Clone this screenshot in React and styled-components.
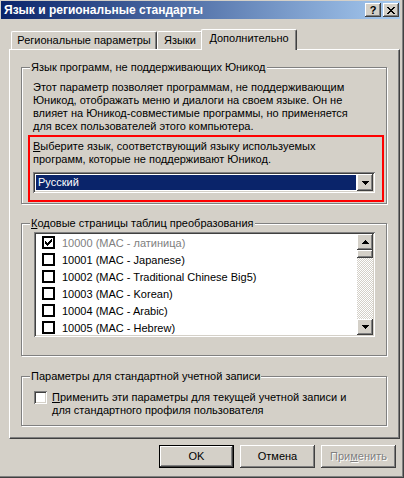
import React from 'react';
import styled, { createGlobalStyle } from 'styled-components';

const Global = createGlobalStyle`
  html, body { margin: 0; padding: 0; background: #d4d0c8; }
  body { font-family: "Liberation Sans", Arial, sans-serif; font-size: 11px; color: #000; }
  * { box-sizing: border-box; }
`;

const raised = `
  background: #d4d0c8;
  box-shadow: inset -1px -1px #404040, inset 1px 1px #fff, inset -2px -2px #808080, inset 2px 2px #d4d0c8;
`;
const sunken = `
  box-shadow: inset 1px 1px #808080, inset -1px -1px #fff, inset 2px 2px #404040, inset -2px -2px #d4d0c8;
`;

const Window = styled.div`
  width: 404px;
  height: 478px;
  background: #d4d0c8;
  padding: 1px 4px 0 1px;
  box-shadow: inset -1px -1px #404040, inset -2px -2px #808080;
  display: flex;
  flex-direction: column;
  overflow: hidden;
`;

const TitleBar = styled.div`
  height: 18px;
  display: flex;
  align-items: center;
  background: linear-gradient(to right, #0a246a, #a6caf0);
  padding: 0 1px 0 3px;
`;

const Title = styled.div`
  flex: 1;
  color: #fff;
  font-weight: bold;
  font-size: 12px;
  line-height: 14px;
  white-space: nowrap;
`;

const CaptionButton = styled.div`
  width: 16px;
  height: 14px;
  margin-left: ${p => p.$gap}px;
  ${raised}
  display: flex;
  align-items: center;
  justify-content: center;
  font-weight: bold;
  font-size: 11px;
  line-height: 14px;
  color: #000;
`;

const TabControl = styled.div`
  margin: 10px 0 0 8px;
  display: flex;
  flex-direction: column;
`;

const TabStrip = styled.div`
  display: flex;
  align-items: flex-end;
  height: 20px;
  padding-left: 2px;
  position: relative;
  z-index: 1;
`;

const Tab = styled.div`
  width: ${p => (p.$active ? p.$w + 4 : p.$w)}px;
  height: ${p => (p.$active ? 21 : 18)}px;
  margin: 0 ${p => (p.$active ? -2 : 0)}px ${p => (p.$active ? -1 : 0)}px;
  background: #d4d0c8;
  border-top: 1px solid #fff;
  border-left: 1px solid #fff;
  border-right: 1px solid #404040;
  border-radius: 2px 2px 0 0;
  box-shadow: inset -1px 0 #808080;
  display: flex;
  align-items: center;
  justify-content: center;
  padding-bottom: ${p => (p.$active ? 3 : 0)}px;
  white-space: nowrap;
  line-height: 13px;
  position: relative;
  z-index: ${p => (p.$active ? 2 : 1)};
`;

const Panel = styled.div`
  height: 390px;
  border-top: 1px solid #fff;
  border-left: 1px solid #fff;
  border-right: 1px solid #404040;
  border-bottom: 1px solid #404040;
  box-shadow: inset -1px -1px #808080;
  padding: 11px 12px 0 11px;
  display: flex;
  flex-direction: column;
`;

const Group = styled.fieldset`
  margin: ${p => p.$mt || 0}px 0 0;
  padding: 0;
  min-width: 0;
  border: 1px solid #808080;
  box-shadow: inset 1px 1px #fff, 1px 1px #fff;
`;

const Legend = styled.legend`
  margin-left: 8px;
  padding: 0 1px;
  line-height: 13px;
  background: #d4d0c8;
`;

const GroupBody = styled.div`
  padding: ${p => p.$pad};
`;

const Text = styled.div`
  line-height: 13px;
  white-space: nowrap;
`;

const Highlight = styled.div`
  margin: 2px -9px 1px -5px;
  border: 2px solid #ff0000;
  padding: 3px 7px 7px 3px;
`;

const Combo = styled.div`
  margin-top: 6px;
  height: 21px;
  display: flex;
  padding: 2px;
  background: #fff;
  ${sunken}
`;

const ComboValue = styled.div`
  flex: 1;
  margin: 1px;
  background: #0a246a;
  color: #fff;
  padding-left: 2px;
  line-height: 15px;
`;

const ArrowButton = styled.div`
  width: 16px;
  height: ${p => p.$h}px;
  flex: none;
  ${raised}
  display: flex;
  align-items: center;
  justify-content: center;
`;

const ListBox = styled.div`
  height: 105px;
  padding: 2px;
  background: #fff;
  ${sunken}
  display: flex;
`;

const Items = styled.div`
  flex: 1;
  overflow: hidden;
`;

const Item = styled.div`
  height: 17px;
  display: flex;
  align-items: center;
  padding-left: 6px;
  gap: 7px;
  color: ${p => (p.$disabled ? '#808080' : '#000')};
  white-space: nowrap;
`;

const FlatCheck = styled.div`
  width: 13px;
  height: 13px;
  border: 2px solid #000;
  background: #fff;
  display: flex;
  align-items: center;
  justify-content: center;
`;

const ScrollBar = styled.div`
  width: 16px;
  display: flex;
  flex-direction: column;
`;

const Thumb = styled.div`
  height: 8px;
  ${raised}
`;

const Track = styled.div`
  flex: 1;
  background: repeating-conic-gradient(#ffffff 0 25%, #d4d0c8 0 50%) 0 0 / 2px 2px;
`;

const CheckRow = styled.div`
  display: flex;
  align-items: flex-start;
  gap: 5px;
`;

const Check3D = styled.div`
  width: 13px;
  height: 13px;
  flex: none;
  background: #fff;
  ${sunken}
`;

const ButtonRow = styled.div`
  display: flex;
  justify-content: flex-end;
  gap: 6px;
  margin: 6px 4px 0 0;
`;

const Button = styled.div`
  width: 75px;
  height: 23px;
  background: #d4d0c8;
  box-shadow: ${p =>
    p.$default
      ? 'inset 0 0 0 1px #000, inset -2px -2px #404040, inset 2px 2px #fff, inset -3px -3px #808080'
      : 'inset -1px -1px #404040, inset 1px 1px #fff, inset -2px -2px #808080, inset 2px 2px #d4d0c8'};
  display: flex;
  align-items: center;
  justify-content: center;
  color: ${p => (p.$disabled ? '#808080' : '#000')};
  text-shadow: ${p => (p.$disabled ? '1px 1px #fff' : 'none')};
  line-height: 13px;
`;

const CloseGlyph = () => (
  <svg width="8" height="7" viewBox="0 0 8 7" shapeRendering="crispEdges">
    <path d="M0 0h2v1H0zM6 0h2v1H6zM1 1h2v1H1zM5 1h2v1H5zM2 2h4v1H2zM3 3h2v1H3zM2 4h4v1H2zM1 5h2v1H1zM5 5h2v1H5zM0 6h2v1H0zM6 6h2v1H6z" fill="#000" />
  </svg>
);

const Arrow = ({ down }) => (
  <svg width="7" height="4" viewBox="0 0 7 4" shapeRendering="crispEdges">
    <path
      d={down ? 'M0 0h7v1H0zM1 1h5v1H1zM2 2h3v1H2zM3 3h1v1H3z' : 'M3 0h1v1H3zM2 1h3v1H2zM1 2h5v1H1zM0 3h7v1H0z'}
      fill="#000"
    />
  </svg>
);

const CheckMark = () => (
  <svg width="7" height="7" viewBox="0 0 7 7" shapeRendering="crispEdges">
    <path d="M0 2h1v3H0zM1 3h1v3H1zM2 4h1v3H2zM3 3h1v3H3zM4 2h1v3H4zM5 1h1v3H5zM6 0h1v3H6z" fill="#000" />
  </svg>
);

const codePages = [
  { label: '10000 (MAC - латиница)', checked: true, disabled: true },
  { label: '10001 (MAC - Japanese)' },
  { label: '10002 (MAC - Traditional Chinese Big5)' },
  { label: '10003 (MAC - Korean)' },
  { label: '10004 (MAC - Arabic)' },
  { label: '10005 (MAC - Hebrew)' },
];

export default function App() {
  return (
    <>
      <Global />
      <Window>
        <TitleBar>
          <Title>Язык и региональные стандарты</Title>
          <CaptionButton $gap={0}>?</CaptionButton>
          <CaptionButton $gap={2}><CloseGlyph /></CaptionButton>
        </TitleBar>

        <TabControl>
          <TabStrip>
            <Tab $w={146}>Региональные параметры</Tab>
            <Tab $w={46}>Языки</Tab>
            <Tab $w={92} $active>Дополнительно</Tab>
          </TabStrip>
          <Panel>
            <Group>
              <Legend>Язык программ, не поддерживающих Юникод</Legend>
              <GroupBody $pad="7px 11px 0 11px">
                <Text>Этот параметр позволяет программам, не поддерживающим</Text>
                <Text>Юникод, отображать меню и диалоги на своем языке. Он не</Text>
                <Text>влияет на Юникод-совместимые программы, но применяется</Text>
                <Text>для всех пользователей этого компьютера.</Text>
                <Highlight>
                  <Text><u>В</u>ыберите язык, соответствующий языку используемых</Text>
                  <Text>программ, которые не поддерживают Юникод.</Text>
                  <Combo>
                    <ComboValue>Русский</ComboValue>
                    <ArrowButton $h={17}><Arrow down /></ArrowButton>
                  </Combo>
                </Highlight>
              </GroupBody>
            </Group>

            <Group $mt={13}>
              <Legend><u>К</u>одовые страницы таблиц преобразования</Legend>
              <GroupBody $pad="2px 11px 18px 12px">
                <ListBox>
                  <Items>
                    {codePages.map(cp => (
                      <Item key={cp.label} $disabled={cp.disabled}>
                        <FlatCheck>{cp.checked && <CheckMark />}</FlatCheck>
                        {cp.label}
                      </Item>
                    ))}
                  </Items>
                  <ScrollBar>
                    <ArrowButton $h={16}><Arrow /></ArrowButton>
                    <Thumb />
                    <Track />
                    <ArrowButton $h={16}><Arrow down /></ArrowButton>
                  </ScrollBar>
                </ListBox>
              </GroupBody>
            </Group>

            <Group $mt={14}>
              <Legend>Параметры для стандартной учетной записи</Legend>
              <GroupBody $pad="8px 11px 8px 12px">
                <CheckRow>
                  <Check3D />
                  <div>
                    <Text><u>П</u>рименить эти параметры для текущей учетной записи и</Text>
                    <Text>для стандартного профиля пользователя</Text>
                  </div>
                </CheckRow>
              </GroupBody>
            </Group>
          </Panel>
        </TabControl>

        <ButtonRow>
          <Button $default>OK</Button>
          <Button>Отмена</Button>
          <Button $disabled>При<u>м</u>енить</Button>
        </ButtonRow>
      </Window>
    </>
  );
}
